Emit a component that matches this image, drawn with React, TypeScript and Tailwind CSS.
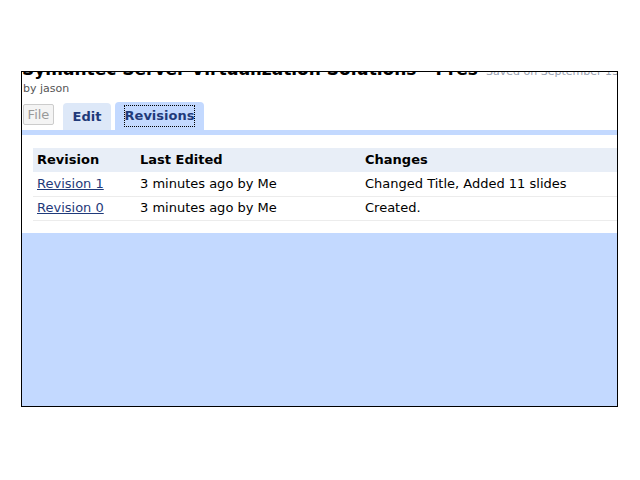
const revisions = [
  { name: 'Revision 1', edited: '3 minutes ago by Me', changes: 'Changed Title, Added 11 slides' },
  { name: 'Revision 0', edited: '3 minutes ago by Me', changes: 'Created.' },
]

export default function App() {
  return (
    <div className="h-[480px] w-[640px] bg-white pl-[21px] pt-[71px] font-['DejaVu_Sans',sans-serif]">
      <div className="flex h-[336px] w-[597px] flex-col overflow-hidden border border-black">
        {/* document header, scrolled partly out of view */}
        <div className="-mt-[14px] flex h-[23px] items-baseline overflow-hidden whitespace-nowrap">
          <span className="w-[456px] shrink-0 overflow-hidden whitespace-nowrap text-[17px] leading-[23px] font-bold text-black">
            Symantec Server Virtualization Solutions - Presentation
          </span>
          <span className="ml-[8px] text-[11px] leading-[16px] text-gray-400">Saved on September 13</span>
        </div>
        <div className="pl-[1px] text-[11px] leading-[16px] text-[#555]">by jason</div>

        <div className="mt-[5px] flex items-end pl-[1px]">
          <div className="mb-[5px] flex h-[21px] w-[31px] items-center justify-center rounded-[2px] border border-[#ccc] bg-[#f4f4f4] text-[13px] text-[#999]">
            File
          </div>
          <div className="ml-[9px] flex h-[27px] w-[48px] items-center justify-center rounded-t-[4px] bg-[#dde8f8] text-[13px] font-bold text-[#1f3a7a]">
            Edit
          </div>
          <div className="ml-[4px] flex h-[28px] w-[89px] items-center justify-center rounded-t-[4px] bg-[#c3d9ff] text-[13px] font-bold text-[#1f3a7a]">
            <span className="outline-1 outline-offset-0 outline-dotted outline-black">Revisions</span>
          </div>
        </div>
        <div className="h-[5px] bg-[#c3d9ff]" />

        <div className="bg-white pt-[13px] pb-[12px] pl-[11px]">
          <table className="w-full border-collapse text-left text-[13px] text-black">
            <thead>
              <tr className="h-[24px] bg-[#e8eef7]">
                <th className="w-[103px] pl-[4px] font-bold">Revision</th>
                <th className="w-[225px] pl-[4px] font-bold">Last Edited</th>
                <th className="pl-[4px] font-bold">Changes</th>
              </tr>
            </thead>
            <tbody>
              {revisions.map((r) => (
                <tr key={r.name} className="h-[24px] border-b border-[#ececec]">
                  <td className="pl-[4px]">
                    <a href="#" className="text-[#1f3a7a] underline">
                      {r.name}
                    </a>
                  </td>
                  <td className="pl-[4px]">{r.edited}</td>
                  <td className="pl-[4px]">{r.changes}</td>
                </tr>
              ))}
            </tbody>
          </table>
        </div>

        <div className="flex-1 bg-[#c3d9ff]" />
      </div>
    </div>
  )
}
